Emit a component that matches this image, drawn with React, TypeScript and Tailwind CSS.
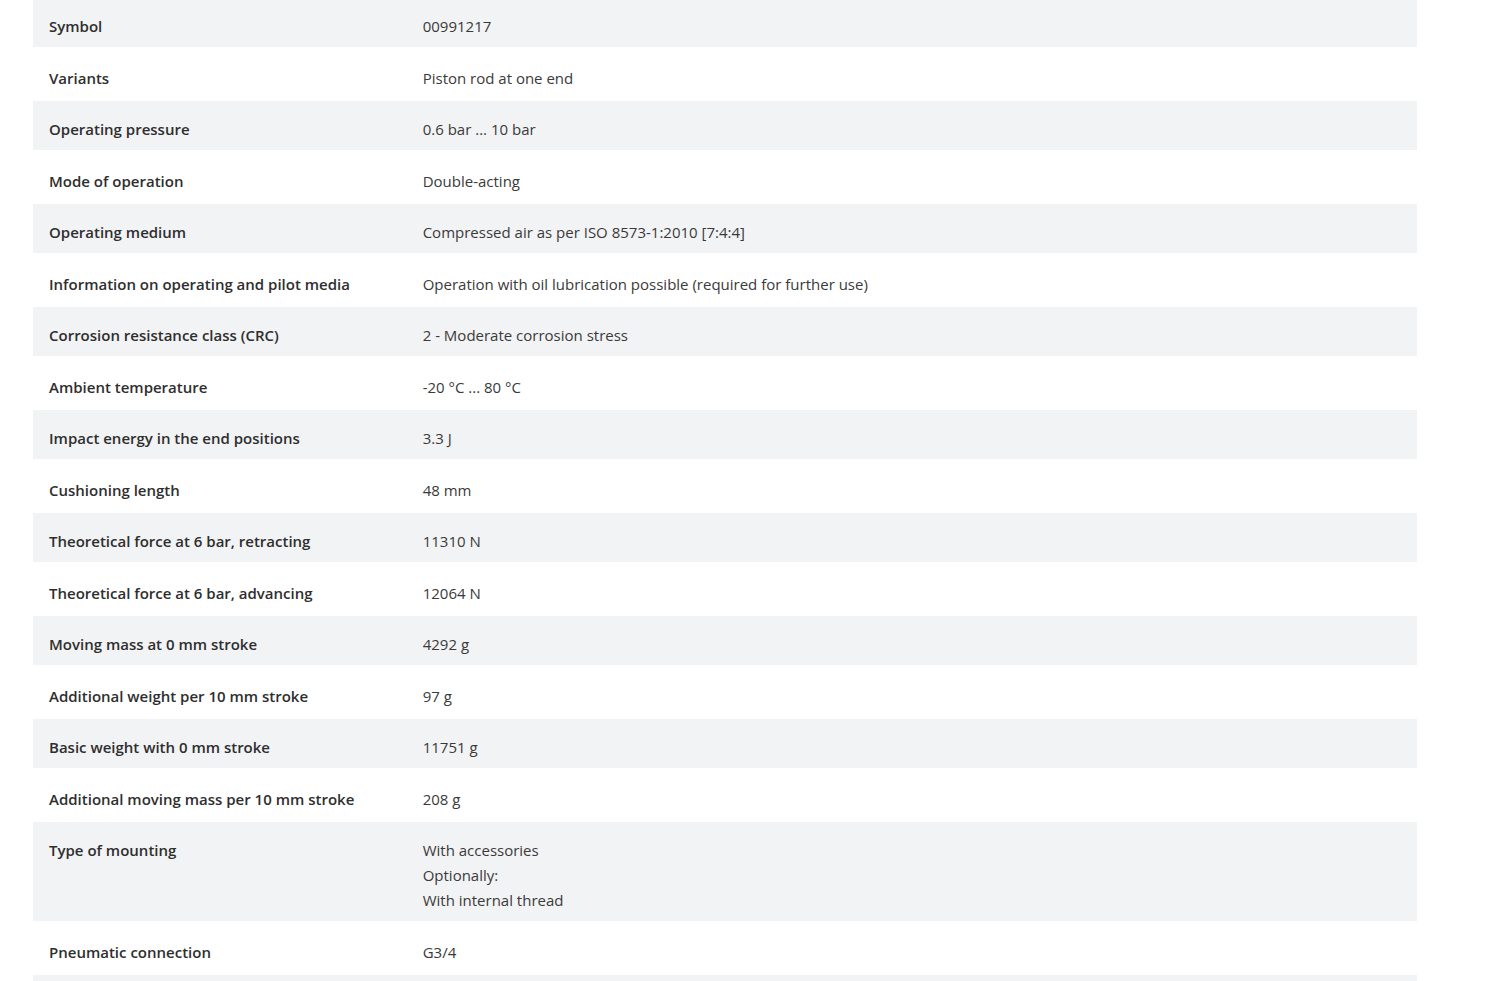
import React from 'react';

type Spec = { label: string; value: string[] };

const specs: Spec[] = [
  { label: 'Symbol', value: ['00991217'] },
  { label: 'Variants', value: ['Piston rod at one end'] },
  { label: 'Operating pressure', value: ['0.6 bar ... 10 bar'] },
  { label: 'Mode of operation', value: ['Double-acting'] },
  { label: 'Operating medium', value: ['Compressed air as per ISO 8573-1:2010 [7:4:4]'] },
  { label: 'Information on operating and pilot media', value: ['Operation with oil lubrication possible (required for further use)'] },
  { label: 'Corrosion resistance class (CRC)', value: ['2 - Moderate corrosion stress'] },
  { label: 'Ambient temperature', value: ['-20 °C ... 80 °C'] },
  { label: 'Impact energy in the end positions', value: ['3.3 J'] },
  { label: 'Cushioning length', value: ['48 mm'] },
  { label: 'Theoretical force at 6 bar, retracting', value: ['11310 N'] },
  { label: 'Theoretical force at 6 bar, advancing', value: ['12064 N'] },
  { label: 'Moving mass at 0 mm stroke', value: ['4292 g'] },
  { label: 'Additional weight per 10 mm stroke', value: ['97 g'] },
  { label: 'Basic weight with 0 mm stroke', value: ['11751 g'] },
  { label: 'Additional moving mass per 10 mm stroke', value: ['208 g'] },
  { label: 'Type of mounting', value: ['With accessories', 'Optionally:', 'With internal thread'] },
  { label: 'Pneumatic connection', value: ['G3/4'] },
];

export default function App() {
  return (
    <div className="min-h-screen bg-white font-['Open_Sans',sans-serif] text-[15px] leading-[25px] text-[#333]">
      <div className="pl-[33px] w-[1417px] -mt-[2px]">
        {specs.map((s, i) => (
          <div
            key={s.label}
            className={
              'grid grid-cols-[27%_1fr] border-b-[3px] border-white pt-4 pb-[7.5px] ' +
              (i % 2 === 0 ? 'bg-[#f2f3f5]' : 'bg-white')
            }
          >
            <div className="pl-4 pr-4 font-semibold text-[#2e2e2e]">{s.label}</div>
            <div className="pl-4 pr-4 text-[#3a3a3a]">
              {s.value.map((v) => (
                <div key={v}>{v}</div>
              ))}
            </div>
          </div>
        ))}
        <div className="h-12 bg-[#f2f3f5]" />
      </div>
    </div>
  );
}
